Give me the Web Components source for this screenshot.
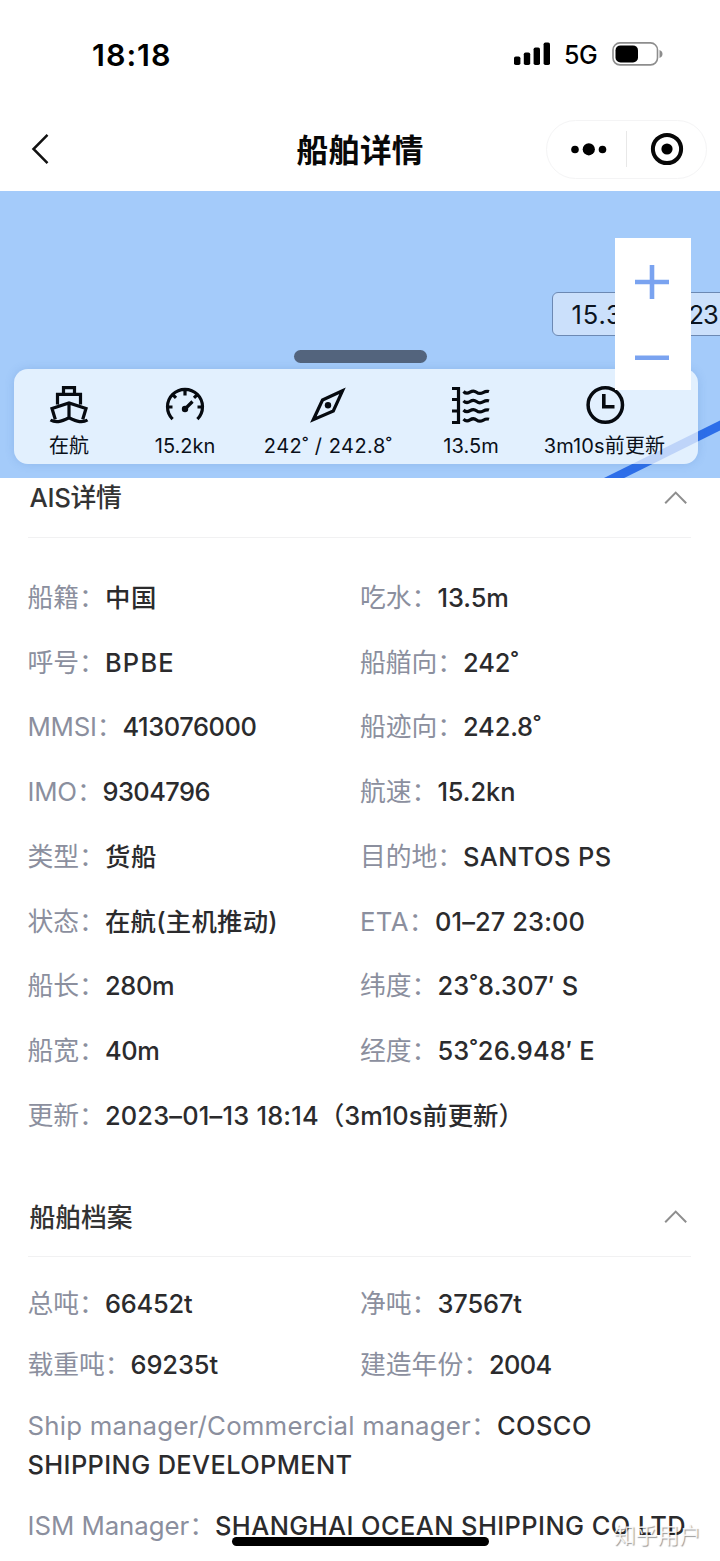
<!DOCTYPE html>
<html lang="zh-CN">
<head>
<meta charset="utf-8">
<title>船舶详情</title>
<style>
html,body{margin:0;padding:0;background:#fff}
body{width:720px;height:1561px;overflow:hidden;font-family:Inter,"Noto Sans CJK SC",sans-serif;color:#2f2f31}
</style>
</head>
<body>
<ship-page></ship-page>
<script>
const define = (name, html, setup) => {
  const tpl = document.createElement('template');
  tpl.innerHTML = html;
  customElements.define(name, class extends HTMLElement {
    connectedCallback() {
      if (this.shadowRoot) return;
      const root = this.attachShadow({ mode: 'open' });
      root.append(tpl.content.cloneNode(true));
      if (setup) setup(this, root);
    }
  });
};

// A run of text tracked so that it fills the width given in "w".
define('fit-text', `<style>:host{display:inline-block;white-space:pre}span{display:inline-block}</style><span></span>`, (el, root) => {
  const s = root.querySelector('span');
  s.textContent = el.getAttribute('text');
  const w = parseFloat(el.getAttribute('w'));
  if (w) {
    const n = [...s.textContent].length;
    s.style.letterSpacing = ((w - s.getBoundingClientRect().width) / n).toFixed(3) + 'px';
  }
});

define('status-bar', `<style>
:host{display:flex;height:108px;box-sizing:border-box;padding:0 57px 0 92px;justify-content:space-between;align-items:center;color:#000}
.time{font-size:30.500px;font-weight:600}
.right{display:flex;align-items:center}
.net{font-size:25px;font-weight:450;margin:2px 15px 0 13px}
svg{display:block}
</style>
<fit-text class="time" text="18:18" w="79.5"></fit-text>
<div class="right">
<svg width="37" height="24" viewBox="0 0 37 24"><rect x="0" y="14.5" width="6.4" height="8.5" rx="1.8"/><rect x="9.8" y="10.5" width="6.4" height="12.5" rx="1.8"/><rect x="19.6" y="5.5" width="6.4" height="17.5" rx="1.8"/><rect x="29.6" y="0.5" width="6.4" height="22.5" rx="1.8"/></svg>
<fit-text class="net" text="5G" w="33"></fit-text>
<svg width="51" height="24" viewBox="0 0 51 24"><rect x="1" y=".9" width="44.5" height="22" rx="7" fill="none" stroke="#8d8d8d" stroke-width="1.6"/><rect x="3.5" y="3.4" width="22.5" height="17" rx="5"/><path d="M47.5 8q3 1.2 3 4t-3 4z" fill="#8d8d8d"/></svg>
</div>`);

define('nav-bar', `<style>
:host{display:grid;grid-template-columns:250px 1fr 250px;height:82.500px;align-items:center;color:#080808}
.back{padding-left:31px;display:block}
.title{font-size:31.6px;font-weight:600;justify-self:center;margin-top:-2px}
.cap{justify-self:end;margin-right:13px;width:161px;height:59px;box-sizing:border-box;border:1.5px solid #f4f4f5;border-radius:30px;display:flex;align-items:center}
.cap svg{display:block;flex:none}
.line{width:1px;height:36px;background:#e8e8e8}
</style>
<svg class="back" width="18" height="32" viewBox="0 0 18 32"><path d="M16.5 1.8 2.5 16l14 14.2" fill="none" stroke="#111" stroke-width="2.5"/></svg>
<fit-text class="title" text="船舶详情" w="127"></fit-text>
<div class="cap">
<svg width="79" height="40" viewBox="0 0 79 40"><circle cx="28" cy="20.5" r="3.8"/><circle cx="41.8" cy="20.3" r="6.1"/><circle cx="55.5" cy="20.5" r="3.8"/></svg>
<div class="line"></div>
<svg width="78" height="40" viewBox="0 0 78 40"><circle cx="40" cy="20" r="14.1" fill="none" stroke="#080808" stroke-width="4"/><circle cx="40" cy="20" r="5.6"/></svg>
</div>`);

define('stat-item', `<style>
:host{display:flex;flex-direction:column;align-items:center;padding-top:16px;box-sizing:border-box;color:#0a0f18}
.t{font-size:20px;line-height:28px;margin-top:7px}
::slotted(svg){display:block;fill:none;stroke:#060a10;stroke-width:3.200}
</style><slot></slot><div class="t"></div>`, (el, root) => {
  root.querySelector('.t').innerHTML = `<fit-text text="${el.getAttribute('text')}" w="${el.getAttribute('w')}"></fit-text>`;
});

define('stats-card', `<style>
:host{display:grid;grid-template-columns:110px 122px 164px 122px 145px;width:684px;height:95px;border-radius:14px;background:rgba(255,255,255,.7);background:rgba(252,255,255,.7);box-shadow:0 0 10px rgba(60,110,180,.2);position:relative}
</style>
<stat-item text="在航" w="40"><svg width="40" height="40"><path d="M14.5 9V2.7h11V9M8.5 19.5V9.3h23v10.200M6.300 34.500 3 23.500 20 18l17 5.500-3.300 11M20 18v14.500M1.500 35c5 3 10 2 18.500-2.200C28.500 37 33.500 38 38.500 35"/></svg></stat-item>
<stat-item text="15.2kn" w="60.5"><svg width="40" height="40"><path d="M7.600 34.200A17.500 17.500 0 1 1 32.400 34.200M20 4.500v6M2.500 22h5M32.500 22h5M7.700 9.600l3.300 3.300M32.300 9.600 29 12.900M20 24l7.500-7.500"/><circle cx="20" cy="24" r="3.200" fill="#060a10" stroke="none"/></svg></stat-item>
<stat-item text="242˚ / 242.8˚" w="128.5"><svg width="40" height="40"><path d="M34.500 5.800 14.500 15 5.300 34.700 25.300 26Z"/><circle cx="20" cy="20.200" r="3.200" fill="#060a10" stroke="none"/></svg></stat-item>
<stat-item text="13.5m" w="55.5"><svg width="40" height="40"><path d="M1 3.500h6.500v34H1M1 14.500h6M1 26h6"/><path d="M12.500 6.500q3 3 6.500.7t6.500 0 6.500.4 6-1M12.500 15.800q3 3 6.500.7t6.500 0 6.500.4 6-1M12.500 25q3 3 6.500.7t6.500 0 6.500.4 6-1M12.500 34.200q3 3 6.500.7t6.500 0 6.500.4 6-1"/></svg></stat-item>
<stat-item text="3m10s前更新" w="121.5"><svg width="40" height="40"><circle cx="20.300" cy="20" r="17.200" stroke-width="3.500"/><path d="M18.800 9v12.700H29.500" stroke-width="3.600"/></svg></stat-item>`);

define('map-view', `<style>
:host{display:flex;flex-direction:column;justify-content:flex-end;height:287.500px;background:#a4cbfa;position:relative;overflow:hidden;box-sizing:border-box;padding:0 0 14px 14px}
.track{position:absolute;left:0;top:0}
.tag{position:absolute;left:551.500px;top:101.500px;width:190px;height:44px;box-sizing:border-box;border:1.500px solid #6c89b3;border-radius:6px;background:#cbe0fb;display:flex;align-items:center;padding-left:19px;font-size:25.500px;color:#0c1420}
.tag fit-text+fit-text{margin-left:66px}
.grab{width:133px;height:13px;border-radius:6.500px;background:#53647d;margin:0 0 6px 279.500px;position:relative}
.zoom{position:absolute;left:615px;top:47.500px;width:76px;height:152px;background:#fff;display:flex;flex-direction:column}
.zoom svg{display:block;stroke:#7aa3f0;stroke-width:4.600}
</style>
<svg class="track" width="720" height="287"><path d="M604 292 L730 229.500" stroke="#2d6ee9" stroke-width="9"/></svg>
<div class="tag"><fit-text text="15.3" w="51"></fit-text><fit-text text="23" w="29"></fit-text></div>
<div class="grab"></div>
<stats-card></stats-card>
<div class="zoom"><svg width="76" height="76"><path d="M20 44h34M37 27v34"/></svg><svg width="76" height="76"><path d="M20 43.700h34"/></svg></div>`);

define('section-head', `<style>
:host{display:flex;justify-content:space-between;box-sizing:border-box;margin:0 29px 0 28px;padding:0 4px 0 1.500px;border-bottom:1.500px solid #f1f1f2;font-size:25.800px;line-height:38px;font-weight:500;color:#333}
fit-text{margin-top:var(--drop,1px)}
svg{display:block;margin-top:13px}
</style><fit-text></fit-text><svg width="23" height="14"><path d="M1.200 12.300 11.700 1.600 22.200 12.300" fill="none" stroke="#8e8e8e" stroke-width="2"/></svg>`, (el, root) => {
  const t = document.createElement('fit-text');
  t.setAttribute('text', el.getAttribute('text'));
  t.setAttribute('w', el.getAttribute('w'));
  root.querySelector('fit-text').replaceWith(t);
});

define('ship-field', `<style>
:host{display:block;font-size:25.800px;line-height:38.700px}
.l{color:#8b8f9e}
.v{font-weight:450;font-size:25.400px;color:#2b2b2d}
.cjk{font-weight:500}
</style><div></div>`, (el, root) => {
  const ws = el.getAttribute('vw').split(',');
  root.querySelector('div').innerHTML =
    `<fit-text class="l" text="${el.getAttribute('label')}：" w="${el.getAttribute('lw')}"></fit-text>` +
    el.getAttribute('value').split('|').map((v, i) => `<fit-text class="v${/[\u4e00-\u9fff]/.test(v) ? ' cjk' : ''}" text="${v}" w="${ws[i]}"></fit-text>`).join('<wbr>');
});

define('field-grid', `<style>
:host{display:grid;grid-template-columns:332.500px 1fr;padding-left:27.500px}
::slotted(ship-field){padding:var(--pad) 0}
::slotted([wide]){grid-column:1/-1}
</style><slot></slot>`);

define('home-indicator', `<style>:host{display:block;position:absolute;left:232px;top:1537px;width:257px;height:9px;border-radius:5px;background:#000}</style>`);
define('water-mark', `<style>:host{display:block;position:absolute;left:614px;top:1520px;font-size:21.500px;line-height:30px;color:rgba(255,255,255,.85);text-shadow:1px 1px 1px rgba(0,0,0,.4)}</style><fit-text text="知乎用户" w="87"></fit-text>`);

define('ship-page', `<style>
:host{display:block;position:relative;width:720px;height:1561px;overflow:hidden;background:#fff}
.a{--pad:13.020px;padding-top:28px}
.b{--pad:11.150px;padding-top:17.500px}
.h1{height:60px}
.h2{height:59.500px;margin-top:48.500px;--drop:2px}
</style>
<status-bar></status-bar>
<nav-bar></nav-bar>
<map-view></map-view>
<section-head class="h1" text="AIS详情" w="92"></section-head>
<field-grid class="a">
<ship-field label="船籍" lw="77.4" value="中国" vw="52"></ship-field>
<ship-field label="吃水" lw="77.4" value="13.5m" vw="71.5"></ship-field>
<ship-field label="呼号" lw="77.4" value="BPBE" vw="70"></ship-field>
<ship-field label="船艏向" lw="103" value="242˚" vw="55.5"></ship-field>
<ship-field label="MMSI" lw="95" value="413076000" vw="134"></ship-field>
<ship-field label="船迹向" lw="103" value="242.8˚" vw="78"></ship-field>
<ship-field label="IMO" lw="75" value="9304796" vw="107.5"></ship-field>
<ship-field label="航速" lw="77.4" value="15.2kn" vw="78"></ship-field>
<ship-field label="类型" lw="77.4" value="货船" vw="52"></ship-field>
<ship-field label="目的地" lw="103" value="SANTOS PS" vw="148.5"></ship-field>
<ship-field label="状态" lw="77.4" value="在航(主机推动)" vw="173"></ship-field>
<ship-field label="ETA" lw="75" value="01–27 23:00" vw="150"></ship-field>
<ship-field label="船长" lw="77.4" value="280m" vw="69.5"></ship-field>
<ship-field label="纬度" lw="77.4" value="23˚8.307′ S" vw="141"></ship-field>
<ship-field label="船宽" lw="77.4" value="40m" vw="54.5"></ship-field>
<ship-field label="经度" lw="77.4" value="53˚26.948′ E" vw="157.5"></ship-field>
<ship-field wide label="更新" lw="77.4" value="2023–01–13 18:14|（3m10s前更新）" vw="214,205"></ship-field>
</field-grid>
<section-head class="h2" text="船舶档案" w="103"></section-head>
<field-grid class="b">
<ship-field label="总吨" lw="77.4" value="66452t" vw="87.5"></ship-field>
<ship-field label="净吨" lw="77.4" value="37567t" vw="84.5"></ship-field>
<ship-field label="载重吨" lw="103" value="69235t" vw="87.5"></ship-field>
<ship-field label="建造年份" lw="129" value="2004" vw="62.5"></ship-field>
<ship-field wide label="Ship manager/Commercial manager" lw="469.5" value="COSCO |SHIPPING DEVELOPMENT" vw="102,325"></ship-field>
<ship-field wide label="ISM Manager" lw="187.5" value="SHANGHAI OCEAN SHIPPING CO LTD" vw="471"></ship-field>
</field-grid>
<home-indicator></home-indicator>
<water-mark></water-mark>`);
</script>
</body>
</html>
